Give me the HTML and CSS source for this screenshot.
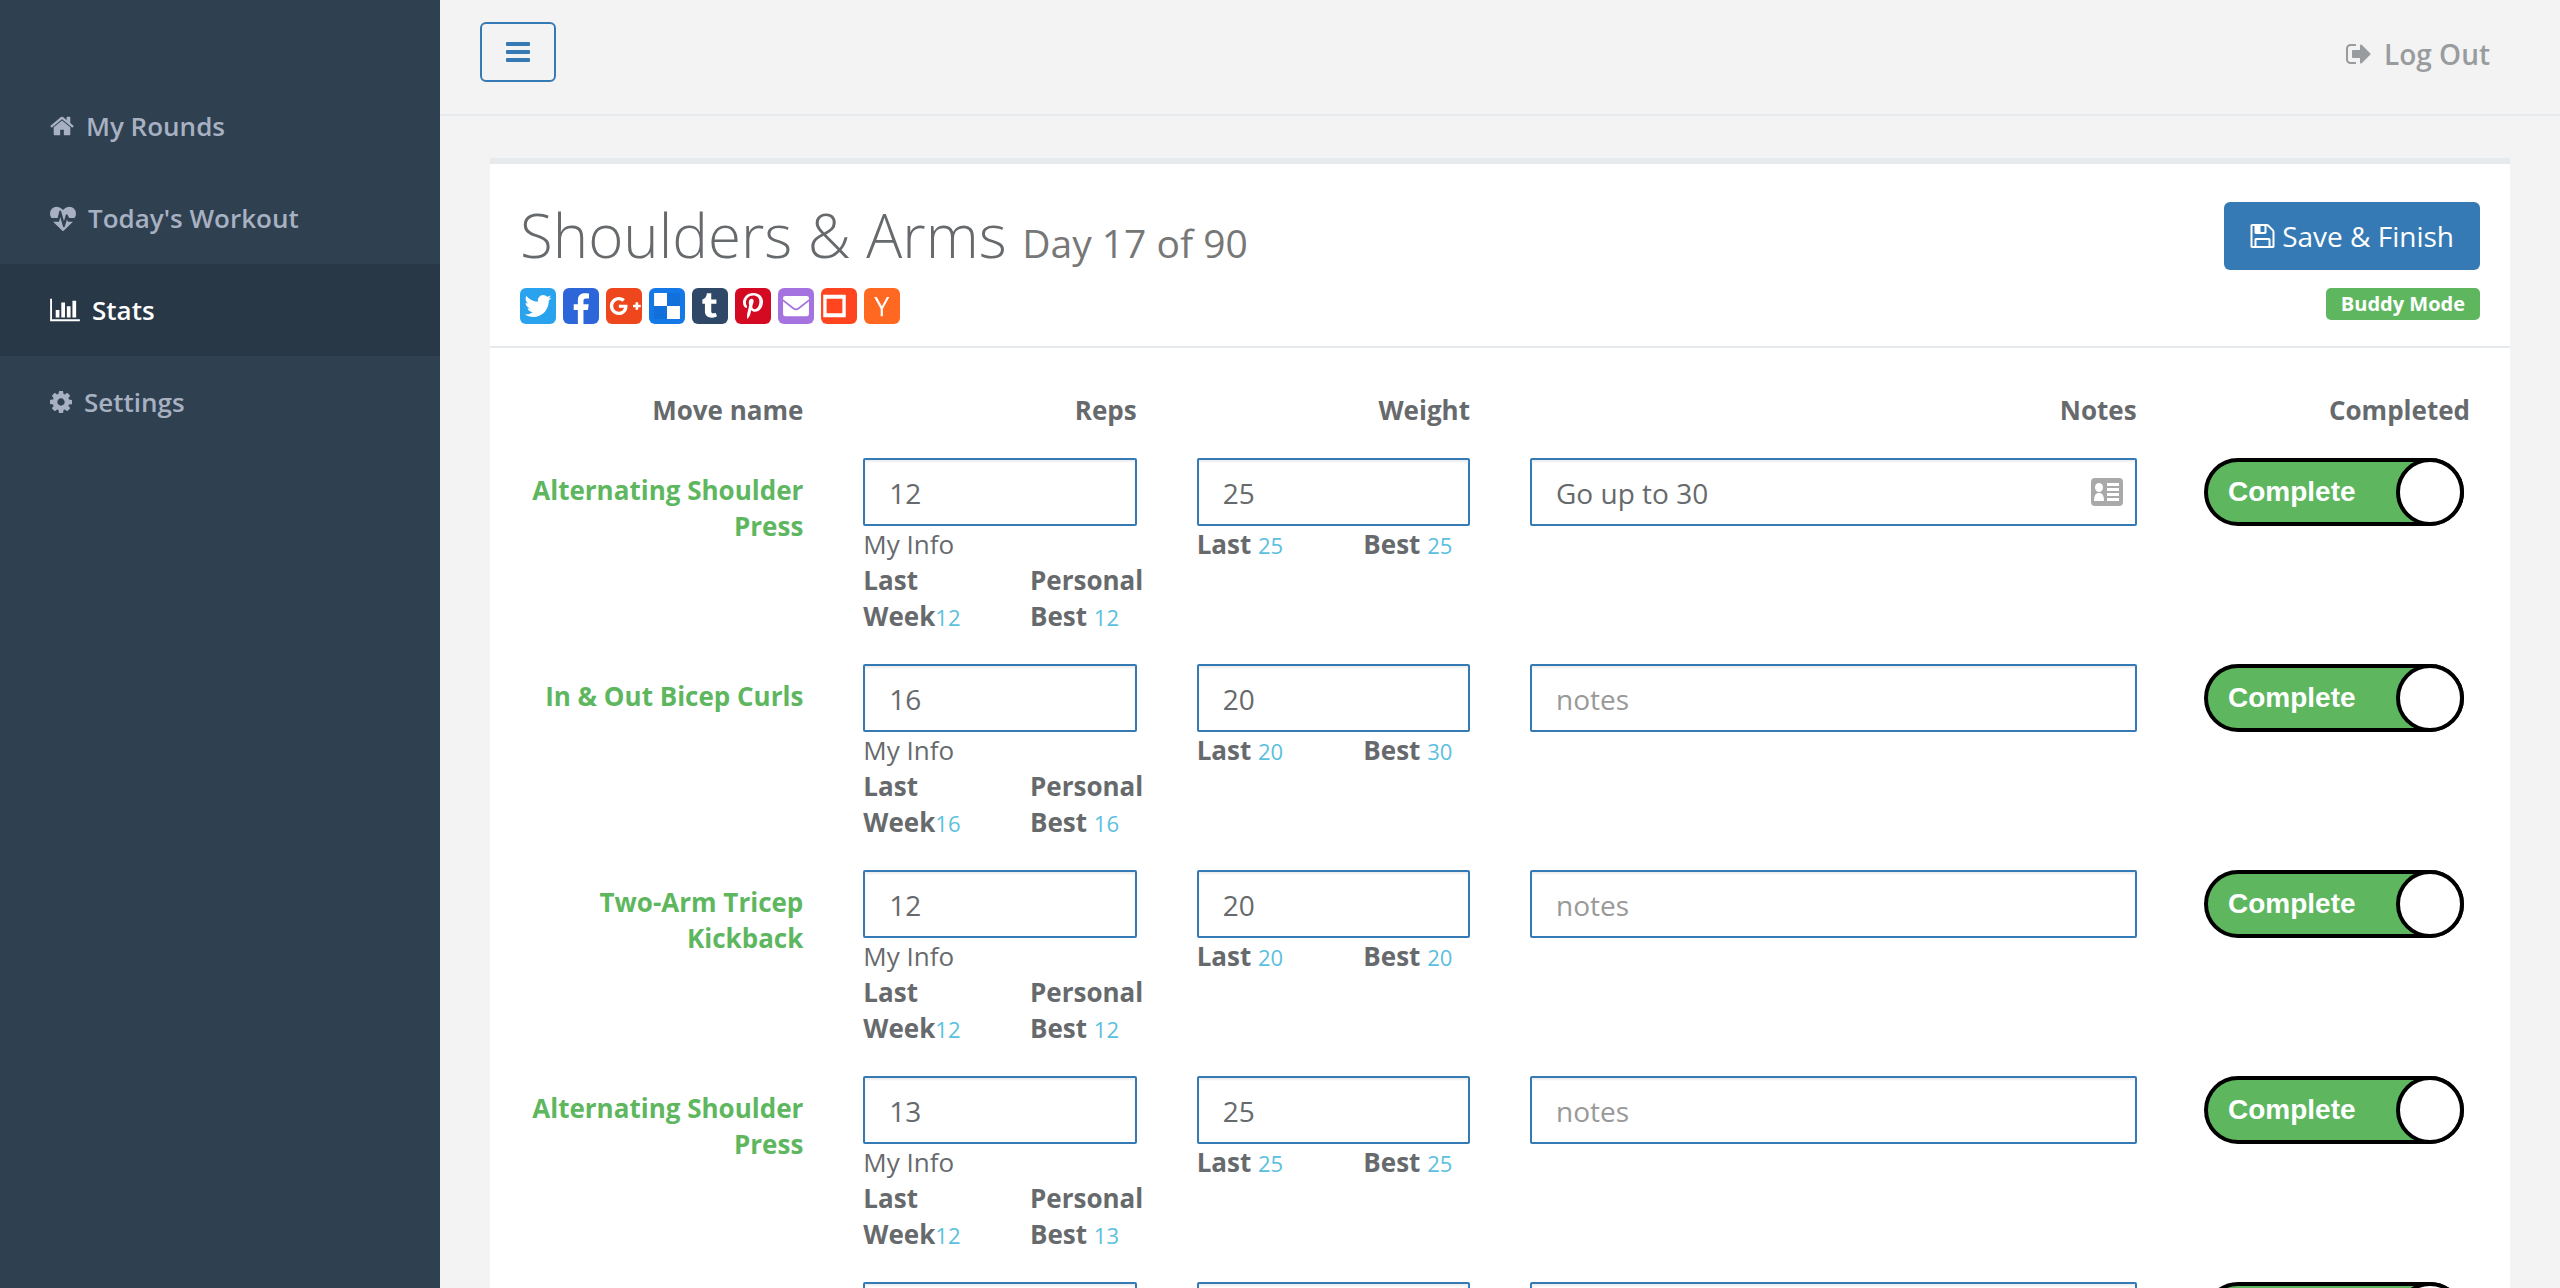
FILE: index.html
```html
<!DOCTYPE html>
<html lang="en">
<head>
<meta charset="utf-8">
<title>Shoulders &amp; Arms</title>
<link rel="stylesheet" href="styles.css">
</head>
<body>
<div class="layout">
  <nav class="sidebar">
    <a class="nav-item" href="#"><svg class="ico-home" viewBox="64 0 1664 1792"><path d="M1472 992v480q0 26-19 45t-45 19h-384v-384h-256v384h-384q-26 0-45-19t-19-45v-480q0-1 .5-3t.5-3l575-474 575 474q1 2 1 6zm223-69l-62 74q-8 9-21 11h-3q-13 0-21-7l-692-577-692 577q-12 8-24 7-13-2-21-11l-62-74q-8-10-7-23.5t11-21.5l719-599q32-26 76-26t76 26l244 204v-195q0-14 9-23t23-9h192q14 0 23 9t9 23v408l219 182q10 8 11 21.5t-7 23.5z"/></svg>My Rounds</a>
    <a class="nav-item" href="#"><svg class="ico-heart" viewBox="0 0 1792 1792"><path d="M1280 1152h305q-5 6-10 10.500t-9 7.500l-3 4-623 600q-18 18-44 18t-44-18l-624-602q-5-2-21-20h369q22 0 39.500-13.500t22.500-34.500l70-281 190 667q6 20 23 33t39 13q21 0 38-13t23-33l146-485 56 112q18 35 57 35zm512-556q0 145-103 300h-369l-111-221q-8-17-25.500-27t-36.500-8q-45 5-56 46l-129 430-196-686q-6-20-23.500-33t-39.500-13-39 13.500-22 34.500l-116 464h-423q-103-155-103-300 0-220 127-344t351-124q62 0 126.500 21.500t120 58 95.500 68.500 76 68q36-36 76-68t95.500-68.500 120-58 126.500-21.500q224 0 351 124t127 344z"/></svg>Today's Workout</a>
    <a class="nav-item active" href="#"><svg class="ico-chart" viewBox="0 0 2048 1792"><path d="M640 896v512h-256v-512h256zm384-512v1024h-256v-1024h256zm1024 1152v128h-2048v-1536h128v1408h1920zm-640-896v768h-256v-768h256zm384-384v1152h-256v-1152h256z"/></svg>Stats</a>
    <a class="nav-item" href="#"><svg class="ico-cog" viewBox="128 0 1536 1792"><path d="M1152 896q0-106-75-181t-181-75-181 75-75 181 75 181 181 75 181-75 75-181zm512-109v222q0 12-8 23t-20 13l-185 28q-19 54-39 91 35 50 107 138 10 12 10 25t-9 23q-27 37-99 108t-94 71q-12 0-26-9l-138-108q-44 23-91 38-16 136-29 186-7 28-36 28h-222q-14 0-24.500-8.500t-11.500-21.500l-28-184q-49-16-90-37l-141 107q-10 9-25 9-14 0-25-11-126-114-165-168-7-10-7-23 0-12 8-23 15-21 51-66.500t54-70.500q-27-50-41-99l-183-27q-13-2-21-12.500t-8-23.500v-222q0-12 8-23t19-13l186-28q14-46 39-92-40-57-107-138-10-12-10-24 0-10 9-23 26-36 98.500-107.500t94.500-71.500q13 0 26 10l138 107q44-23 91-38 16-136 29-186 7-28 36-28h222q14 0 24.500 8.500t11.500 21.500l28 184q49 16 90 37l142-107q9-9 24-9 13 0 25 10 129 119 165 170 7 8 7 22 0 12-8 23-15 21-51 66.500t-54 70.500q26 50 41 98l183 28q13 2 21 12.500t8 23.500z"/></svg>Settings</a>
  </nav>

  <div class="page">
    <header class="topbar">
      <button class="menu-toggle" type="button" aria-label="Toggle menu"><svg viewBox="0 0 24 20"><rect width="24" height="4" rx="1"/><rect y="8" width="24" height="4" rx="1"/><rect y="16" width="24" height="4" rx="1"/></svg></button>
      <a class="logout" href="#"><svg viewBox="64 0 1664 1792"><path d="M704 1440q0 4 1 20t.5 26.500-3 23.500-10 19.500-20.500 6.500h-320q-119 0-203.500-84.500t-84.500-203.500v-704q0-119 84.500-203.500t203.500-84.500h320q13 0 22.500 9.500t9.500 22.500q0 4 1 20t.5 26.500-3 23.500-10 19.500-20.500 6.500h-320q-66 0-113 47t-47 113v704q0 66 47 113t113 47h312l11.500 1 11.500 3 8 5.500 7 9 2 13.500zm928-544q0 26-19 45l-544 544q-19 19-45 19t-45-19-19-45v-288h-448q-26 0-45-19t-19-45v-384q0-26 19-45t45-19h448v-288q0-26 19-45t45-19 45 19l544 544q19 19 19 45z"/></svg>Log Out</a>
    </header>

    <main class="card">
      <div class="card-head">
        <div>
          <h1>Shoulders &amp; Arms <small>Day 17 of 90</small></h1>
          <div class="share">
            <a class="twitter" href="#" aria-label="Twitter"><svg viewBox="0 0 32 32"><path d="M28 8.557a9.913 9.913 0 0 1-2.828.775 4.930 4.930 0 0 0 2.166-2.725 9.738 9.738 0 0 1-3.130 1.194 4.920 4.920 0 0 0-3.593-1.550 4.924 4.924 0 0 0-4.794 6.049c-4.090-.21-7.720-2.170-10.150-5.150a4.942 4.942 0 0 0-.665 2.477c0 1.710.87 3.214 2.190 4.100a4.968 4.968 0 0 1-2.230-.616v.06c0 2.390 1.700 4.380 3.952 4.830-.414.115-.85.174-1.297.174-.318 0-.626-.03-.928-.086a4.935 4.935 0 0 0 4.600 3.420 9.893 9.893 0 0 1-6.114 2.107c-.398 0-.79-.023-1.175-.068a13.953 13.953 0 0 0 7.550 2.213c9.056 0 14.010-7.507 14.010-14.013 0-.213-.005-.426-.015-.637.96-.695 1.795-1.560 2.455-2.550z"/></svg></a>
            <a class="facebook" href="#" aria-label="Facebook"><svg viewBox="0 0 32 32"><path d="M13.200 32V19.500H9.500v-5h3.700v-3.600c0-3.900 2.400-6.200 6-6.200 1.800 0 3.200.1 3.900.2v4.400h-2.500c-2 0-2.400 1-2.400 2.300v2.900h4.600l-.6 5h-4V32z"/></svg></a>
            <a class="gplus" href="#" aria-label="Google Plus"><svg viewBox="2 2 28 28"><path d="M29 15h-2v-2h-2v2h-2v2h2v2h2v-2h2m-17-2v2.400h3.970c-.16 1.030-1.200 3.020-3.970 3.020-2.390 0-4.340-1.980-4.340-4.420s1.950-4.420 4.340-4.420c1.360 0 2.270.58 2.790 1.080l1.900-1.830C15.470 9.690 13.890 9 12 9c-3.870 0-7 3.130-7 7s3.130 7 7 7c4.040 0 6.720-2.840 6.720-6.840 0-.46-.05-.81-.11-1.160H12z"/></svg></a>
            <a class="delicious" href="#" aria-label="Delicious"><svg viewBox="0 0 32 32"><path class="dark" d="M4.500 4.500h23v23h-23z"/><path d="M4.500 4.500H16V16H4.500zM16 16h11.500v11.500H16z"/></svg></a>
            <a class="tumblr" href="#" aria-label="Tumblr"><svg viewBox="0 0 32 32"><path d="M21 22c-.5.300-1.300.500-2 .5-1.500 0-1.900-.9-1.900-2.100V14h4.600V10.200h-4.600V4.700h-3.700c-.1 0-.2.100-.2.200-.2 1.900-1 4.400-4 5.400V14h2.300v7.200c0 2.500 1.700 5.300 6.300 5.200 1.700 0 3.800-.6 4.400-1.300z"/></svg></a>
            <a class="pinterest" href="#" aria-label="Pinterest"><svg viewBox="0 0 32 32"><path d="M16.539 4.500c-6.277 0-9.442 4.500-9.442 8.253 0 2.272.86 4.293 2.705 5.046.303.125.574.005.662-.33.061-.231.205-.816.27-1.060.088-.331.053-.447-.191-.736-.532-.627-.873-1.439-.873-2.591 0-3.338 2.498-6.327 6.505-6.327 3.548 0 5.497 2.168 5.497 5.062 0 3.810-1.686 7.025-4.188 7.025-1.382 0-2.416-1.142-2.085-2.545.397-1.674 1.166-3.480 1.166-4.689 0-1.081-.581-1.983-1.782-1.983-1.413 0-2.548 1.462-2.548 3.419 0 1.247.421 2.091.421 2.091l-1.699 7.199c-.505 2.137-.076 4.755-.039 5.019.021.158.223.196.314.077.13-.17 1.813-2.247 2.384-4.324.162-.587.929-3.631.929-3.631.46.876 1.801 1.646 3.227 1.646 4.247 0 7.128-3.871 7.128-9.053.003-3.918-3.317-7.568-8.361-7.568z"/></svg></a>
            <a class="email" href="#" aria-label="Email"><svg viewBox="0 0 32 32"><rect x="4.500" y="7" width="23" height="18" rx="2"/><path class="flap" d="M4 10.500l9.500 7.500q2.500 2 5 0l9.500-7.500"/></svg></a>
            <a class="frame" href="#" aria-label="Symbaloo"><svg viewBox="0 0 32 32"><path d="M2 6h20v20H2zM5 9.500v13h14v-13z" fill-rule="evenodd"/></svg></a>
            <a class="hn" href="#" aria-label="Hacker News"><svg viewBox="0 0 32 32"><path d="M9 8h2.300l4.600 8.300L20.300 8h2.200l-5.700 10.400V25h-2v-6.600z"/></svg></a>
          </div>
        </div>
        <div class="actions">
          <button class="save" type="button"><svg viewBox="128 0 1536 1792"><path d="M512 1536h768v-384h-768v384zm896 0h128v-896q0-14-10-38.500t-20-34.500l-281-281q-10-10-34-20t-39-10v416q0 40-28 68t-68 28h-576q-40 0-68-28t-28-68v-416h-128v1280h128v-416q0-40 28-68t68-28h832q40 0 68 28t28 68v416zm-384-928v-320q0-13-9.500-22.500t-22.500-9.500h-192q-13 0-22.500 9.500t-9.500 22.500v320q0 13 9.500 22.500t22.500 9.500h192q13 0 22.500-9.500t9.500-22.500zm640 32v928q0 40-28 68t-68 28h-1344q-40 0-68-28t-28-68v-1344q0-40 28-68t68-28h928q40 0 88 20t76 48l280 280q28 28 48 76t20 88z"/></svg>Save &amp; Finish</button>
          <button class="buddy" type="button">Buddy Mode</button>
        </div>
      </div>

      <table class="moves">
        <colgroup><col><col><col><col class="wide"><col></colgroup>
        <thead>
          <tr><th>Move name</th><th>Reps</th><th>Weight</th><th>Notes</th><th>Completed</th></tr>
        </thead>
        <tbody>
          <tr>
            <th scope="row">Alternating Shoulder Press</th>
            <td><input class="field" type="text" value="12" aria-label="Reps"><div>My Info</div><div class="history"><div><b>Last Week</b><small>12</small></div><div><b>Personal Best</b> <small>12</small></div></div></td>
            <td><input class="field" type="text" value="25" aria-label="Weight"><div class="history"><div><b>Last</b> <small>25</small></div><div><b>Best</b> <small>25</small></div></div></td>
            <td><div class="note"><input class="field" type="text" value="Go up to 30" placeholder="notes" aria-label="Notes"><svg class="contact" viewBox="0 0 32 28"><rect width="32" height="28" rx="4" fill="#a9a9a9"/><g fill="#fff"><ellipse cx="8" cy="9.500" rx="4" ry="4.500"/><path d="M3 23q0-7 3.500-8h3q3.500 1 3.500 8zM16 5h12v3H16zM16 10h12v3H16zM16 15h12v3H16zM16 20h12v3H16z"/></g></svg></div></td>
            <td><label class="toggle"><span>Complete</span><input type="checkbox" checked></label></td>
          </tr>
          <tr>
            <th scope="row">In &amp; Out Bicep Curls</th>
            <td><input class="field" type="text" value="16" aria-label="Reps"><div>My Info</div><div class="history"><div><b>Last Week</b><small>16</small></div><div><b>Personal Best</b> <small>16</small></div></div></td>
            <td><input class="field" type="text" value="20" aria-label="Weight"><div class="history"><div><b>Last</b> <small>20</small></div><div><b>Best</b> <small>30</small></div></div></td>
            <td><input class="field" type="text" placeholder="notes" aria-label="Notes"></td>
            <td><label class="toggle"><span>Complete</span><input type="checkbox" checked></label></td>
          </tr>
          <tr>
            <th scope="row">Two-Arm Tricep Kickback</th>
            <td><input class="field" type="text" value="12" aria-label="Reps"><div>My Info</div><div class="history"><div><b>Last Week</b><small>12</small></div><div><b>Personal Best</b> <small>12</small></div></div></td>
            <td><input class="field" type="text" value="20" aria-label="Weight"><div class="history"><div><b>Last</b> <small>20</small></div><div><b>Best</b> <small>20</small></div></div></td>
            <td><input class="field" type="text" placeholder="notes" aria-label="Notes"></td>
            <td><label class="toggle"><span>Complete</span><input type="checkbox" checked></label></td>
          </tr>
          <tr>
            <th scope="row">Alternating Shoulder Press</th>
            <td><input class="field" type="text" value="13" aria-label="Reps"><div>My Info</div><div class="history"><div><b>Last Week</b><small>12</small></div><div><b>Personal Best</b> <small>13</small></div></div></td>
            <td><input class="field" type="text" value="25" aria-label="Weight"><div class="history"><div><b>Last</b> <small>25</small></div><div><b>Best</b> <small>25</small></div></div></td>
            <td><input class="field" type="text" placeholder="notes" aria-label="Notes"></td>
            <td><label class="toggle"><span>Complete</span><input type="checkbox" checked></label></td>
          </tr>
          <tr>
            <th scope="row"></th>
            <td><input class="field" type="text" aria-label="Reps"></td>
            <td><input class="field" type="text" aria-label="Weight"></td>
            <td><input class="field" type="text" aria-label="Notes"></td>
            <td><label class="toggle"><span></span><input type="checkbox" aria-label="Complete" checked></label></td>
          </tr>
        </tbody>
      </table>
    </main>
  </div>
</div>
</body>
</html>
```
FILE: styles.css
```css
* { box-sizing: border-box; }

body {
  margin: 0;
  background: #f3f3f3;
  color: #676a6c;
  font: 26px/36px "Open Sans", sans-serif;
}

a { text-decoration: none; }
svg { display: block; flex: none; fill: currentColor; }
button, input { font-family: inherit; }
small { line-height: 1; }

.layout { display: flex; height: 100vh; overflow: hidden; }

/* Sidebar */
.sidebar { flex: none; width: 440px; padding-top: 80px; background: #2f4050; }
.nav-item {
  display: flex;
  align-items: center;
  gap: 12px;
  height: 92px;
  padding-left: 50px;
  color: #a7b1c2;
  font-weight: 600;
}
.nav-item.active { background: #293846; color: #fff; }
.nav-item svg { height: 26px; }
.ico-home { width: 24px; }
.ico-heart { width: 26px; }
.ico-chart { width: 30px; }
.ico-cog { width: 22px; }

/* Top bar */
.page { flex: 1; min-width: 0; overflow-y: auto; scrollbar-width: none; }
.topbar {
  display: flex;
  justify-content: space-between;
  align-items: flex-start;
  padding: 22px 70px 28px 40px;
  border-bottom: 2px solid #e7eaec;
}
.menu-toggle {
  display: grid;
  place-items: center;
  width: 76px;
  height: 60px;
  border: 2px solid #367ab5;
  border-radius: 6px;
  background: none;
  color: #367ab5;
}
.menu-toggle svg { width: 24px; height: 20px; }
.logout {
  display: flex;
  align-items: center;
  gap: 12px;
  height: 64px;
  color: #999c9e;
  font-size: 28px;
  font-weight: 600;
}
.logout svg { width: 26px; height: 28px; }

/* Workout card */
.card { margin: 42px 50px 0; border-top: 6px solid #e7eaec; background: #fff; }
.card-head {
  display: flex;
  justify-content: space-between;
  padding: 38px 30px 22px;
  border-bottom: 2px solid #e7eaec;
}
h1 { margin: 0 0 20px; font-size: 60px; font-weight: 300; line-height: 66px; }
h1 small { color: #777; font-size: 39px; font-weight: 400; }

.share { display: flex; gap: 7px; }
.share a { width: 36px; height: 36px; border-radius: 6px; color: #fff; overflow: hidden; }
.twitter { background: #2aa3ef; }
.facebook { background: #2c66d8; }
.gplus { background: #ee471d; }
.delicious { background: #1479e6; }
.delicious .dark { fill: #1170da; }
.tumblr { background: #2f4868; }
.pinterest { background: #d40a22; }
.email { background: #a573e0; }
.email .flap { fill: none; stroke: #a573e0; stroke-width: 1.5; }
.frame { background: #ff4520; }
.hn { background: #ff6820; }

.actions { display: flex; flex-direction: column; align-items: flex-end; gap: 18px; }
.save {
  display: flex;
  align-items: center;
  gap: 7px;
  height: 68px;
  padding: 0 26px;
  border: 0;
  border-radius: 6px;
  background: #367ab5;
  color: #fff;
  font-size: 28px;
}
.save svg { width: 25px; height: 28px; }
.buddy {
  height: 32px;
  padding: 0 15px;
  border: 0;
  border-radius: 5px;
  background: #5eb75f;
  color: #fff;
  font-size: 20px;
  font-weight: 700;
  line-height: 32px;
}

/* Moves table */
.moves {
  width: calc(100% - 20px);
  margin: 44px 10px 0;
  border-collapse: collapse;
  table-layout: fixed;
}
.moves .wide { width: 33.333%; }
.moves th { padding: 0 30px 30px; text-align: right; font-weight: 700; }
.moves td { padding: 0 30px 30px; vertical-align: top; }
.moves tbody th { padding-top: 14px; color: #5eb75f; vertical-align: top; }

.field {
  display: block;
  width: 100%;
  height: 68px;
  padding: 2px 24px 0;
  border: 2px solid #367ab5;
  border-radius: 2px;
  background: #fff;
  box-shadow: inset 0 2px 2px rgba(0, 0, 0, 0.07);
  color: #676a6c;
  font-size: 28px;
}
.field::placeholder { color: #999; }
.note { position: relative; }
.contact { position: absolute; top: 20px; right: 14px; width: 32px; height: 28px; }

.history {
  display: grid;
  grid-template-columns: repeat(2, minmax(0, 1fr));
  margin-right: -60px;
}
.history > div { padding-right: 60px; }
.history small { color: #5bc0de; font-size: 22px; }

.toggle {
  display: flex;
  align-items: center;
  justify-content: space-between;
  width: 260px;
  height: 68px;
  margin-left: auto;
  margin-right: 6px;
  padding-left: 20px;
  border: 4px solid #000;
  border-radius: 34px;
  background: #5eb75f;
  color: #fff;
  font: 700 28px/36px "Liberation Sans", sans-serif;
}
.toggle input {
  appearance: none;
  flex: none;
  width: 68px;
  height: 68px;
  margin: -4px;
  border: 4px solid #000;
  border-radius: 50%;
  background: #fff;
}
```
